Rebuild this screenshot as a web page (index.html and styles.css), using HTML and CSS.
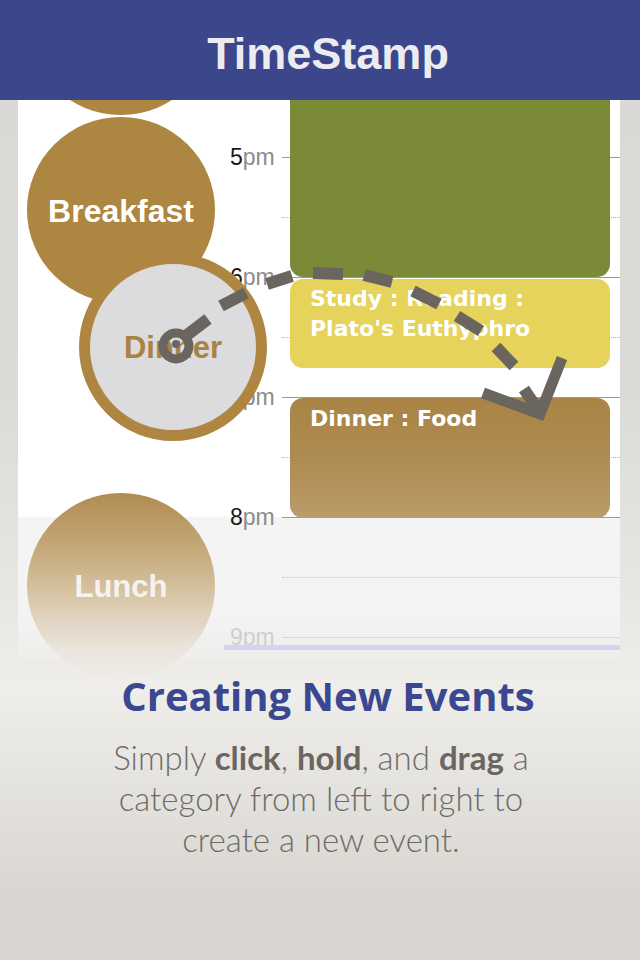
FILE: index.html
```html
<!DOCTYPE html>
<html lang="en">
<head>
<meta charset="utf-8">
<title>TimeStamp</title>
<link rel="stylesheet" href="styles.css">
</head>
<body>
<header class="topbar"><h1 class="brand">TimeStamp</h1></header>

<section class="screen">
  <div class="categories">
    <div class="cat cat-top"></div>
    <div class="cat">Breakfast</div>
    <div class="cat-slot"></div>
    <div class="cat cat-fade">Lunch</div>
  </div>

  <div class="timeline">
    <div class="ticks">
      <div class="tick"><span class="lbl"><b>5</b>pm</span><i class="rule"></i></div>
      <div class="tick"><i class="rule dotted"></i></div>
      <div class="tick"><span class="lbl"><b>6</b>pm</span><i class="rule"></i></div>
      <div class="tick"><i class="rule dotted"></i></div>
      <div class="tick"><span class="lbl"><b>7</b>pm</span><i class="rule"></i></div>
      <div class="tick"><i class="rule dotted"></i></div>
      <div class="tick"><span class="lbl"><b>8</b>pm</span><i class="rule"></i></div>
      <div class="tick"><i class="rule dotted light"></i></div>
      <div class="tick faded"><span class="lbl"><b>9</b>pm</span><i class="rule"></i></div>
    </div>
    <div class="events">
      <div class="event ev-green"></div>
      <div class="event ev-yellow">Study : Reading :<br>Plato's Euthyphro</div>
      <div class="event ev-brown">Dinner : Food</div>
      <div class="now-line"></div>
    </div>
  </div>

  <div class="drag-bubble">Dinner</div>
</section>

<svg class="drag-path" width="640" height="700" viewBox="0 0 640 700" aria-hidden="true">
  <g fill="none" stroke="#6b655f" stroke-width="12">
    <circle cx="176" cy="346" r="13" stroke-width="9"/>
    <path d="M187 335 L208 319"/>
    <path d="M221 306 L246 293"/>
    <path d="M267 284 L292 276"/>
    <path d="M313 273 L343 274"/>
    <path d="M364 275 L392 282"/>
    <path d="M413 291 L439 304"/>
    <path d="M457 316 L481 331"/>
    <path d="M496 347 L514 366"/>
    <path d="M524 389 L540 413"/>
    <polyline points="483,393 540,414 562,358" stroke-width="11" stroke-linejoin="miter"/>
  </g>
  <circle cx="176" cy="344" r="4" fill="#6b655f"/>
</svg>

<section class="caption">
  <h2 class="caption-title">Creating New Events</h2>
  <p class="caption-text">Simply <strong>click</strong>, <strong>hold</strong>, and <strong>drag</strong> a<br>category from left to right to<br>create a new event.</p>
</section>
</body>
</html>
```

FILE: styles.css
```css
* { box-sizing: border-box; }

html, body {
  margin: 0;
  padding: 0;
}

body {
  position: relative;
  width: 640px;
  height: 960px;
  overflow: hidden;
  font-family: "Liberation Sans", Arial, sans-serif;
  background: linear-gradient(to bottom, #dad8d4 0px, #dddbd7 400px, #e9e7e4 600px, #efeeeb 690px, #e4e2de 790px, #d9d6d1 900px, #d8d5d0 960px);
}

.topbar {
  position: relative;
  z-index: 5;
  height: 100px;
  background: #3c468b;
  display: flex;
  align-items: center;
  justify-content: center;
}

.brand {
  margin: 0;
  padding: 8px 0 0 16px;
  font-family: "Liberation Sans", Arial, sans-serif;
  font-weight: 700;
  font-size: 45px;
  color: #ecebf0;
  letter-spacing: 0;
}

.screen {
  position: relative;
  margin-left: 18px;
  width: 602px;
  height: 560px;
  display: grid;
  grid-template-columns: 206px 396px;
  background: linear-gradient(to bottom, #ffffff 0px, #ffffff 416px, #f4f4f4 418px, #f3f3f3 520px, rgba(243, 243, 243, 0) 575px);
}

.categories {
  display: flex;
  flex-direction: column;
  align-items: center;
  gap: 2px;
}

.cat, .cat-slot {
  flex: none;
  width: 188px;
  height: 186px;
}

.cat {
  border-radius: 50%;
  background: #ad8641;
  color: #ffffff;
  font-family: "Liberation Sans", Arial, sans-serif;
  font-weight: 700;
  font-size: 32px;
  display: flex;
  align-items: center;
  justify-content: center;
  padding-top: 2px;
}

.cat-top {
  margin-top: -171px;
}

.cat-fade {
  font-size: 31px;
  color: #f6f3ef;
  background: linear-gradient(to bottom, #b08c50 0%, #c8ad80 35%, #dccbb0 60%, #ebe6df 85%, #eeebe7 100%);
}

.timeline {
  display: grid;
}

.ticks, .events {
  grid-area: 1 / 1;
}

.ticks {
  padding-top: 27px;
  display: flex;
  flex-direction: column;
}

.tick {
  height: 60px;
  display: flex;
  align-items: center;
}

.lbl {
  width: 58px;
  padding-left: 6px;
  font-family: "Liberation Sans", Arial, sans-serif;
  font-size: 23px;
  color: #8c8c8c;
  line-height: 1;
  flex: none;
}

.lbl b {
  font-weight: 400;
  color: #1a1a1a;
}

.rule {
  flex: 1;
  height: 0;
  border-top: 1px solid #9a9a9a;
}

.rule.dotted {
  margin-left: 58px;
  border-top: 1px dotted #b4b4b4;
}

.rule.dotted.light {
  border-top-color: #c6c6c6;
}

.tick.faded .lbl,
.tick.faded .lbl b {
  color: #cfcfd2;
}

.tick.faded .rule {
  border-top-color: #d8d8d8;
}

.events {
  display: flex;
  flex-direction: column;
  align-items: flex-start;
}

.event {
  width: 320px;
  margin-left: 66px;
  border-radius: 13px;
  padding: 5px 20px;
  font-family: "DejaVu Sans", Verdana, sans-serif;
  font-weight: 700;
  font-size: 22px;
  line-height: 30px;
  color: #ffffff;
}

.ev-green {
  height: 177px;
  border-radius: 0 0 13px 13px;
  background: #7b8a37;
}

.ev-yellow {
  margin-top: 2px;
  height: 89px;
  background: #e6d35b;
}

.ev-brown {
  margin-top: 30px;
  height: 120px;
  padding-top: 6px;
  background: linear-gradient(to bottom, #a98445 0%, #ae8b51 50%, #bb9c6b 100%);
}

.now-line {
  margin-top: 127px;
  width: 396px;
  height: 5px;
  background: #d4d3f1;
}

.drag-bubble {
  position: absolute;
  left: 61px;
  top: 153px;
  width: 188px;
  height: 188px;
  border-radius: 50%;
  border: 11px solid #ae8641;
  background: #dcdbdd;
  color: #a98342;
  font-family: "Liberation Sans", Arial, sans-serif;
  font-weight: 700;
  font-size: 31px;
  display: flex;
  align-items: center;
  justify-content: center;
  padding-top: 2px;
  z-index: 2;
}

.drag-path {
  position: absolute;
  left: 0;
  top: 0;
  z-index: 3;
  pointer-events: none;
}

.caption {
  text-align: center;
}

.caption-title {
  margin: 12px 0 0;
  padding-left: 16px;
  font-family: "Open Sans", sans-serif;
  font-weight: 700;
  font-size: 40px;
  line-height: 48px;
  color: #3c4791;
}

.caption-text {
  margin: 17px 0 0;
  padding-left: 2px;
  font-family: Lato, sans-serif;
  font-weight: 300;
  font-size: 33px;
  line-height: 41px;
  color: #6e6b67;
}

.caption-text strong {
  font-weight: 700;
  color: #6b6660;
}
```
